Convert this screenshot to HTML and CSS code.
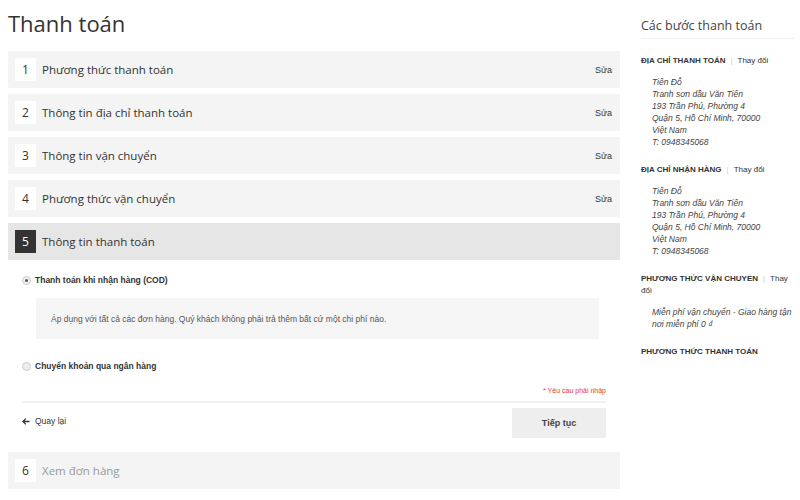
FILE: index.html
```html
<!DOCTYPE html>
<html>
<head>
  <title>Thanh toán</title>
  <link rel="stylesheet" href="styles.css">
</head>
<body>

  <div class="page">
    <div class="main">
      <h1>Thanh toán</h1>

      <div class="step">
        <span class="num">1</span>
        <span class="label">Phương thức thanh toán</span>
        <a class="edit">Sửa</a>
      </div>
      <div class="step">
        <span class="num">2</span>
        <span class="label">Thông tin địa chỉ thanh toán</span>
        <a class="edit">Sửa</a>
      </div>
      <div class="step">
        <span class="num">3</span>
        <span class="label">Thông tin vận chuyển</span>
        <a class="edit">Sửa</a>
      </div>
      <div class="step">
        <span class="num">4</span>
        <span class="label">Phương thức vận chuyển</span>
        <a class="edit">Sửa</a>
      </div>

      <div class="step active">
        <span class="num">5</span>
        <span class="label">Thông tin thanh toán</span>
      </div>
      <div class="step-body">
        <label class="option">
          <span class="radio checked"></span>
          Thanh toán khi nhận hàng (COD)
        </label>
        <div class="desc">Áp dụng với tất cả các đơn hàng. Quý khách không phải trả thêm bất cứ một chi phí nào.</div>
        <label class="option">
          <span class="radio"></span>
          Chuyển khoản qua ngân hàng
        </label>
        <p class="required">* Yêu cầu phải nhập</p>
        <div class="actions">
          <a class="back">
            <svg width="8" height="7" viewBox="0 0 8 7"><path d="M7.5 3.5H1M3.8 0.6L0.9 3.5l2.9 2.9" fill="none" stroke="#333" stroke-width="1.3"/></svg>
            Quay lại
          </a>
          <button class="next">Tiếp tục</button>
        </div>
      </div>

      <div class="step disabled">
        <span class="num">6</span>
        <span class="label">Xem đơn hàng</span>
      </div>
    </div>

    <div class="sidebar">
      <h3>Các bước thanh toán</h3>

      <div class="block">
        <div class="block-title"><strong>ĐỊA CHỈ THANH TOÁN</strong><span class="sep">|</span><a>Thay đổi</a></div>
        <address>
          Tiến Đỗ<br>
          Tranh sơn dầu Văn Tiến<br>
          193 Trần Phú, Phường 4<br>
          Quận 5, Hồ Chí Minh, 70000<br>
          Việt Nam<br>
          T: 0948345068
        </address>
      </div>

      <div class="block">
        <div class="block-title"><strong>ĐỊA CHỈ NHẬN HÀNG</strong><span class="sep">|</span><a>Thay đổi</a></div>
        <address>
          Tiến Đỗ<br>
          Tranh sơn dầu Văn Tiến<br>
          193 Trần Phú, Phường 4<br>
          Quận 5, Hồ Chí Minh, 70000<br>
          Việt Nam<br>
          T: 0948345068
        </address>
      </div>

      <div class="block">
        <div class="block-title"><strong>PHƯƠNG THỨC VẬN CHUYỂN</strong><span class="sep">|</span><a>Thay đổi</a></div>
        <address>Miễn phí vận chuyển - Giao hàng tận nơi miễn phí 0 ₫</address>
      </div>

      <div class="block">
        <div class="block-title"><strong>PHƯƠNG THỨC THANH TOÁN</strong></div>
      </div>
    </div>
  </div>

</body>
</html>
```

FILE: styles.css
```css
body {
  margin: 0;
  padding: 0 5px 0 8px;
  font-family: "Liberation Sans", Arial, sans-serif;
  color: #333;
  background: #fff;
}

.page {
  display: flex;
  gap: 21px;
}

.main {
  width: 612px;
  flex-shrink: 0;
}

h1 {
  font-family: "Open Sans", sans-serif;
  font-weight: 400;
  font-size: 22px;
  line-height: 30px;
  margin: 8px 0 13px;
  color: #333;
}

.step {
  display: flex;
  align-items: center;
  height: 37px;
  padding: 0 8px 0 7px;
  margin-bottom: 6px;
  background: #f4f4f4;
}

.step .num {
  width: 21px;
  height: 23px;
  background: #fff;
  display: flex;
  align-items: center;
  justify-content: center;
  font-family: "Open Sans", sans-serif;
  font-size: 12px;
  color: #333;
}

.step .label {
  margin-left: 6px;
  font-family: "Open Sans", sans-serif;
  font-size: 11.5px;
  color: #333;
  flex: 1;
}

.step .edit {
  font-size: 9px;
  color: #333;
}

.step.active {
  background: #e6e6e6;
  margin-bottom: 0;
}

.step.active .num {
  background: #333;
  color: #fff;
}

.step.disabled .label {
  color: #999;
}

.step-body {
  padding: 13px 14px 14px 14px;
}

.option {
  display: flex;
  align-items: center;
  font-size: 8.5px;
  font-weight: bold;
  color: #333;
  height: 14px;
}

.radio {
  width: 7px;
  height: 7px;
  border-radius: 50%;
  border: 1px solid #ccc;
  background: #eee;
  margin-right: 4px;
  display: flex;
  align-items: center;
  justify-content: center;
}

.radio.checked::after {
  content: "";
  width: 3px;
  height: 3px;
  border-radius: 50%;
  background: #555;
}

.desc {
  background: #f5f5f5;
  margin: 11px 7px 20px 14px;
  padding: 0 15px;
  height: 41px;
  display: flex;
  align-items: center;
  font-size: 8.5px;
  color: #555;
}

.required {
  margin: 14px 0 0;
  text-align: right;
  font-size: 7px;
  color: #e4393c;
  padding-bottom: 7px;
  border-bottom: 2px solid #f0f0f0;
}

.actions {
  display: flex;
  justify-content: space-between;
  align-items: center;
  margin-top: 5px;
}

.back {
  display: flex;
  align-items: center;
  gap: 5px;
  font-size: 8.5px;
  color: #333;
  margin-top: -4px;
}

.next {
  width: 94px;
  height: 30px;
  border: none;
  background: #eee;
  font-family: "Liberation Sans", Arial, sans-serif;
  font-size: 9px;
  font-weight: bold;
  color: #444;
}

.sidebar {
  width: 154px;
}

.sidebar h3 {
  font-family: "Open Sans", sans-serif;
  font-weight: 400;
  font-size: 12.5px;
  color: #444;
  margin: 17px 0 0;
  padding-bottom: 4px;
  border-bottom: 1px solid #eee;
}

.block {
  margin-top: 16px;
}

.block-title {
  font-size: 8px;
  line-height: 12px;
}

.block-title strong {
  color: #333;
}

.block-title .sep {
  color: #ccc;
  margin: 0 5px;
}

.block-title a {
  color: #333;
}

.sidebar address {
  font-size: 8.5px;
  line-height: 12px;
  color: #444;
  margin: 9px 0 0 11px;
}
```
